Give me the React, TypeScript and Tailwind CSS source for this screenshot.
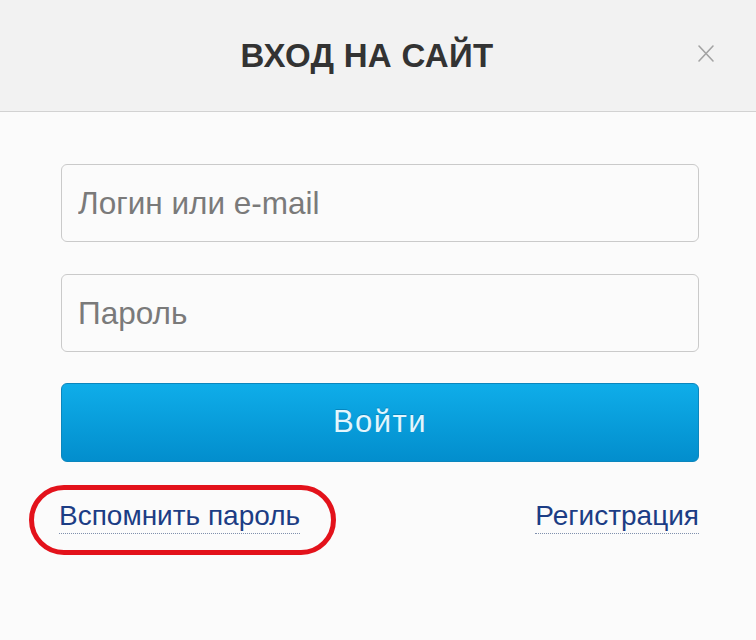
import React from "react";

export default function App() {
  return (
    <div
      className="w-[756px] h-[640px] bg-[#fbfbfb] flex flex-col overflow-hidden"
      style={{ fontFamily: '"Liberation Sans", Arial, sans-serif' }}
    >
      <div className="relative h-[112px] shrink-0 bg-[#f2f2f2] border-b border-[#d2d2d2] flex items-center justify-center pr-[22px]">
        <h1 className="text-[33px] leading-[33px] font-bold text-[#333333] tracking-[0.3px]">
          ВХОД НА САЙТ
        </h1>
        <button className="absolute right-[41px] top-[44px] w-[18px] h-[19px] flex items-center justify-center">
          <svg width="18" height="19" viewBox="0 0 18 19" fill="none">
            <path d="M2 2 L16 17 M16 2 L2 17" stroke="#a3a3a3" strokeWidth="1.6" strokeLinecap="round" />
          </svg>
        </button>
      </div>

      <div className="flex flex-col pl-[61px] pr-[57px] pt-[52px]">
        <input
          className="h-[78px] w-full rounded-[6px] border border-[#cacaca] bg-[#fbfbfb] pl-[16px] text-[31.5px] text-[#555] placeholder:text-[#7a7a7a] outline-none"
          placeholder="Логин или e-mail"
        />
        <input
          className="mt-[32px] h-[78px] w-full rounded-[6px] border border-[#cacaca] bg-[#fbfbfb] pl-[16px] text-[31.5px] text-[#555] placeholder:text-[#7a7a7a] outline-none"
          placeholder="Пароль"
        />
        <button className="mt-[31px] h-[79px] w-full rounded-[6px] border border-[#0b86bd] bg-gradient-to-b from-[#0fade9] to-[#038ecd] text-[31px] tracking-[1.5px] text-[#e3f6fd] [text-shadow:0_-1px_0_rgba(0,80,130,0.35)]">
          Войти
        </button>

        <div className="relative mt-[37px] ml-[-2px] flex justify-between text-[28px] leading-[34px] text-[#1c3d85]">
          <div className="absolute left-[-30px] top-[-14px] w-[307px] h-[70px] rounded-full border-[5px] border-[#e3121b]" />
          <a className="relative inline-block border-b border-dotted border-[#8090ad]" href="#">
            Вспомнить пароль
          </a>
          <a className="inline-block border-b border-dotted border-[#8090ad]" href="#">
            Регистрация
          </a>
        </div>
      </div>
    </div>
  );
}
